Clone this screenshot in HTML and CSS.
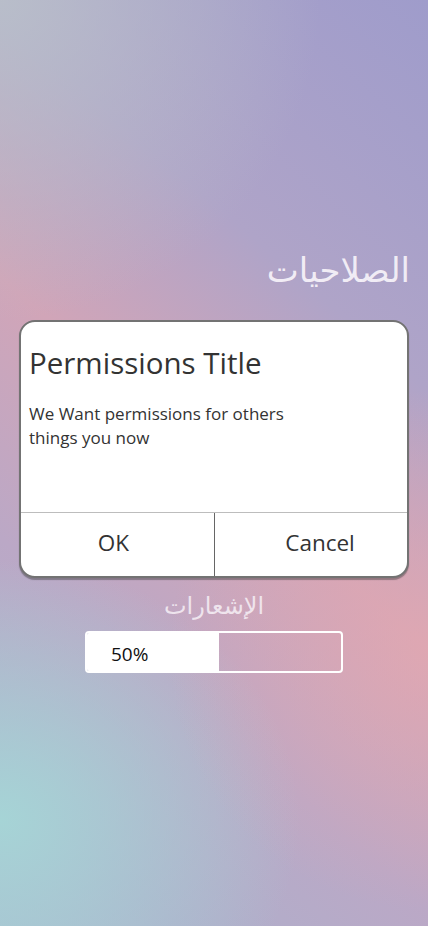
FILE: index.html
```html
<!DOCTYPE html>
<html lang="ar">
<head>
<meta charset="utf-8">
<title>Permissions</title>
<link rel="stylesheet" href="styles.css">
</head>
<body>
<main class="screen">
  <h1 class="heading" dir="rtl">الصلاحيات</h1>
  <section class="dialog" dir="ltr">
    <div class="dialog-body">
      <h2 class="dialog-title">Permissions Title</h2>
      <p class="dialog-text">We Want permissions for others things you now</p>
    </div>
    <div class="dialog-actions">
      <button class="dialog-btn dialog-btn-ok">OK</button>
      <button class="dialog-btn dialog-btn-cancel">Cancel</button>
    </div>
  </section>
  <h3 class="label" dir="rtl">الإشعارات</h3>
  <div class="progress" dir="ltr">
    <div class="progress-fill" style="width:52%"><span class="progress-text">50%</span></div>
  </div>
</main>
</body>
</html>
```
FILE: styles.css
```css
html, body {
  margin: 0;
  padding: 0;
}
body {
  width: 428px;
  height: 926px;
  overflow: hidden;
  font-family: "Open Sans", "Noto Sans", sans-serif;
}
.screen {
  box-sizing: border-box;
  width: 428px;
  height: 926px;
  display: flex;
  flex-direction: column;
  align-items: center;
  padding-top: 246px;
  background:
    radial-gradient(circle at 0 0, rgba(186, 194, 202, 0.85) 0, rgba(186, 194, 202, 0) 320px),
    radial-gradient(circle at 428px 650px, rgba(228, 168, 176, 0.7) 0, rgba(228, 168, 176, 0) 260px),
    radial-gradient(ellipse 300px 260px at 0 820px, rgba(166, 212, 214, 1) 0, rgba(166, 212, 214, 0.6) 40%, rgba(166, 212, 214, 0) 100%),
    linear-gradient(221deg, #9f9ccb 0%, #afa4c8 30%, #d1a5b8 50%, #bba8c6 70%, #afafcb 88%, #aab8cf 100%);
}
.heading {
  align-self: stretch;
  margin: 0;
  padding-right: 18px;
  font-family: "DejaVu Sans", sans-serif;
  font-weight: normal;
  font-size: 34px;
  line-height: 48px;
  color: rgba(248, 244, 250, 0.92);
  text-align: right;
}
.dialog {
  box-sizing: border-box;
  width: 390px;
  margin-top: 26px;
  background: #fff;
  border: 2px solid #737373;
  border-radius: 16px;
  box-shadow: 0 2px 1px rgba(60, 60, 60, 0.45);
  overflow: hidden;
}
.dialog-body {
  box-sizing: border-box;
  height: 190px;
  padding: 22px 8px 0;
}
.dialog-title {
  margin: 0;
  font-weight: normal;
  font-size: 29.5px;
  line-height: 38px;
  color: #333;
}
.dialog-text {
  margin: 20px 0 0;
  width: 270px;
  font-size: 17px;
  line-height: 24px;
  color: #333;
}
.dialog-actions {
  display: grid;
  grid-template-columns: 1fr 1fr;
  border-top: 1px solid #bdbdbd;
  height: 63px;
}
.dialog-btn {
  border: 0;
  background: transparent;
  font-family: inherit;
  font-size: 22.5px;
  color: #333;
  padding: 0 0 5px;
}
.dialog-btn-ok {
  padding-right: 8px;
}
.dialog-btn-cancel {
  border-left: 1px solid #666;
  padding-left: 18px;
}
.label {
  margin: 13px 0 0;
  font-family: "DejaVu Sans", sans-serif;
  font-weight: normal;
  font-size: 24px;
  line-height: 30px;
  color: rgba(246, 240, 246, 0.85);
}
.progress {
  box-sizing: border-box;
  width: 258px;
  height: 42px;
  margin-top: 10px;
  border: 2px solid #fff;
  border-radius: 4px;
  overflow: hidden;
}
.progress-fill {
  height: 100%;
  background: #fff;
  display: flex;
  align-items: center;
  padding: 3px 0 0 24px;
  box-sizing: border-box;
}
.progress-text {
  font-size: 19px;
  color: #111;
}
```
